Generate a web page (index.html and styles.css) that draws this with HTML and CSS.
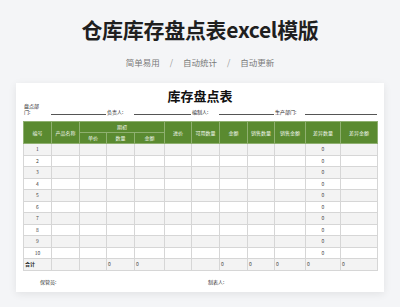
FILE: index.html
```html
<!DOCTYPE html>
<html lang="zh">
<head>
<meta charset="utf-8">
<link rel="stylesheet" href="styles.css">
</head>
<body>
<header class="hero">
  <h1 class="hero-title">仓库库存盘点表excel模版</h1>
  <p class="hero-sub"><span>简单易用</span><span class="sep">/</span><span>自动统计</span><span class="sep">/</span><span>自动更新</span></p>
</header>
<main class="card">
  <h2 class="sheet-title">库存盘点表</h2>
  <div class="info">
    <span class="lbl w1"><span class="wrap">盘点部门:</span></span><span class="line w23"></span>
    <span class="lbl w4">负责人:</span><span class="line w56"></span>
    <span class="lbl w7">编制人:</span><span class="line w89"></span>
    <span class="lbl w10">生产部门:</span><span class="line w1112"></span>
  </div>
  <table class="sheet">
    <colgroup>
      <col style="width:28px"><col style="width:28px"><col style="width:27px"><col style="width:28px"><col style="width:30px"><col style="width:27px"><col style="width:28px"><col style="width:28px"><col style="width:27px"><col style="width:31px"><col style="width:35px"><col style="width:37px">
    </colgroup>
    <thead>
      <tr>
        <th rowspan="2">编号</th><th rowspan="2">产品名称</th><th colspan="3">期初</th><th rowspan="2">进价</th><th rowspan="2">可用数量</th><th rowspan="2">金额</th><th rowspan="2">销售数量</th><th rowspan="2">销售金额</th><th rowspan="2">差异数量</th><th rowspan="2">差异金额</th>
      </tr>
      <tr><th>单价</th><th>数量</th><th>金额</th></tr>
    </thead>
    <tbody>
      <tr class="odd"><td class="c">1</td><td></td><td></td><td></td><td></td><td></td><td></td><td></td><td></td><td></td><td class="c">0</td><td></td></tr>
      <tr><td class="c">2</td><td></td><td></td><td></td><td></td><td></td><td></td><td></td><td></td><td></td><td class="c">0</td><td></td></tr>
      <tr class="odd"><td class="c">3</td><td></td><td></td><td></td><td></td><td></td><td></td><td></td><td></td><td></td><td class="c">0</td><td></td></tr>
      <tr><td class="c">4</td><td></td><td></td><td></td><td></td><td></td><td></td><td></td><td></td><td></td><td class="c">0</td><td></td></tr>
      <tr class="odd"><td class="c">5</td><td></td><td></td><td></td><td></td><td></td><td></td><td></td><td></td><td></td><td class="c">0</td><td></td></tr>
      <tr><td class="c">6</td><td></td><td></td><td></td><td></td><td></td><td></td><td></td><td></td><td></td><td class="c">0</td><td></td></tr>
      <tr class="odd"><td class="c">7</td><td></td><td></td><td></td><td></td><td></td><td></td><td></td><td></td><td></td><td class="c">0</td><td></td></tr>
      <tr><td class="c">8</td><td></td><td></td><td></td><td></td><td></td><td></td><td></td><td></td><td></td><td class="c">0</td><td></td></tr>
      <tr class="odd"><td class="c">9</td><td></td><td></td><td></td><td></td><td></td><td></td><td></td><td></td><td></td><td class="c">0</td><td></td></tr>
      <tr><td class="c">10</td><td></td><td></td><td></td><td></td><td></td><td></td><td></td><td></td><td></td><td class="c">0</td><td></td></tr>
      <tr class="odd total"><td class="b">合计</td><td></td><td></td><td>0</td><td>0</td><td></td><td></td><td>0</td><td>0</td><td>0</td><td>0</td><td>0</td></tr>
    </tbody>
  </table>
  <div class="foot">
    <span class="foot-a">保管员:</span>
    <span class="foot-b">制表人:</span>
  </div>
</main>
</body>
</html>
```
FILE: styles.css
```css
html, body {
  margin: 0;
  padding: 0;
}
body {
  width: 400px;
  height: 307px;
  overflow: hidden;
  background: #f4f5f7;
  font-family: "Noto Sans CJK SC", "Noto Sans", sans-serif;
  color: #333;
}
.hero {
  text-align: center;
  padding-top: 15px;
  height: 83px;
  box-sizing: border-box;
}
.hero-title {
  margin: 0;
  font-size: 21px;
  line-height: 28px;
  font-weight: 700;
  color: #1f1f1f;
  letter-spacing: -0.3px;
}
.hero-sub {
  margin: 13px 0 0;
  font-size: 8.5px;
  line-height: 12px;
  color: #7a7a7a;
}
.hero-sub .sep {
  margin: 0 10px;
  color: #999;
}
.card {
  margin: 0 16px;
  height: 209px;
  background: #fff;
  box-shadow: 0 2px 8px rgba(0, 0, 0, 0.08);
  padding: 5px 7px 0;
  box-sizing: border-box;
}
.sheet-title {
  margin: 0;
  text-align: center;
  font-size: 13px;
  line-height: 16px;
  font-weight: 700;
  color: #111;
}
.info {
  display: flex;
  align-items: flex-end;
  height: 13px;
  margin-bottom: 4px;
  font-size: 5px;
  line-height: 6px;
  color: #222;
}
.lbl {
  display: block;
  padding-left: 1px;
  padding-bottom: 2px;
  box-sizing: border-box;
}
.wrap {
  display: block;
  width: 16px;
}
.line {
  display: block;
  height: 2px;
  border-bottom: 1px solid #555;
  margin-bottom: 2px;
}
.w1 { width: 28px; }
.w23 { width: 55px; }
.w4 { width: 28px; }
.w56 { width: 57px; }
.w7 { width: 28px; }
.w89 { width: 55px; }
.w10 { width: 31px; }
.w1112 { width: 72px; }
.sheet {
  border-collapse: collapse;
  table-layout: fixed;
  width: 354px;
  font-size: 5px;
  color: #444;
}
.sheet th {
  background: #5a8a30;
  color: #f2f7ee;
  font-weight: 400;
  border: 1px solid #8fb070;
  height: 10px;
  padding: 0;
  text-align: center;
  vertical-align: middle;
  line-height: 6px;
}
.sheet td {
  border: 1px solid #d6d6d6;
  height: 10.5px;
  padding: 0 1px;
  line-height: 6px;
}
.sheet tr.odd td {
  background: #f3f3f3;
}
.sheet td.c {
  text-align: center;
}
.sheet td.b {
  font-weight: 700;
  color: #222;
}
.foot {
  display: flex;
  font-size: 5px;
  line-height: 6px;
  color: #333;
  margin-top: 8px;
}
.foot-a {
  margin-left: 17px;
  width: 168px;
}
```
